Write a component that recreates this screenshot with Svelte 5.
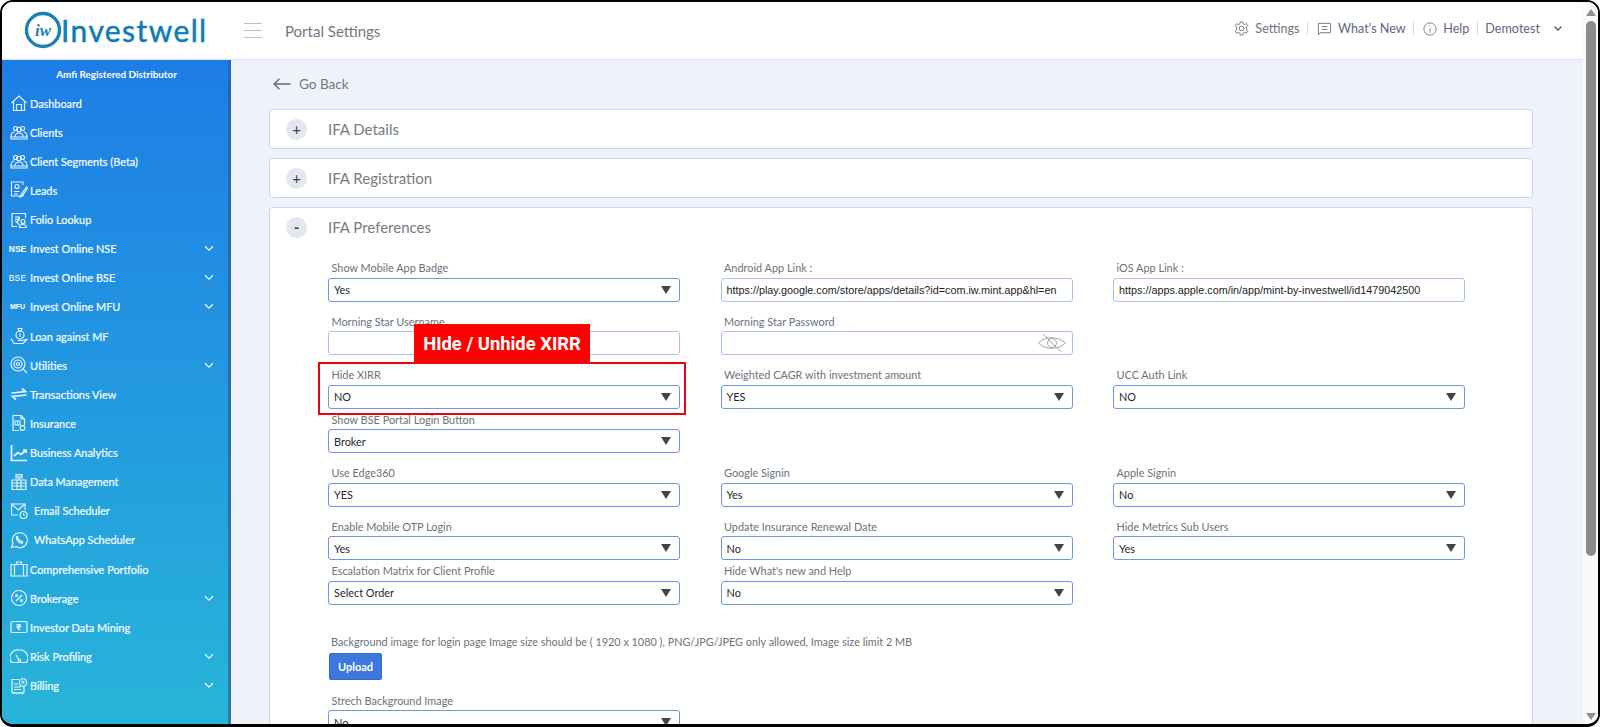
<script>
  const c = (x, y, r) => `M${x - r} ${y}a${r} ${r} 0 1 0 ${2 * r} 0a${r} ${r} 0 1 0 ${-2 * r} 0`;
  const nav = [
    { t: 'Dashboard', d: ['M1.5 9 9 2l7.5 7', 'M3.5 7.5V16.5H14.5V7.5', 'M6.5 16.5V10.5H11.5V16.5'] },
    { t: 'Clients', d: [c(5.5, 5.5, 2), c(12.5, 5.5, 2), c(9, 6.5, 2.3), 'M1 14c0-3 1.5-5 3.5-5', 'M17 14c0-3-1.5-5-3.5-5', 'M5 14c0-2.500 1.500-4 4-4s4 1.500 4 4', 'M1 14H17V16H1Z'] },
    { t: 'Client Segments (Beta)', d: [c(5.5, 5.5, 2), c(12.5, 5.5, 2), c(9, 6.5, 2.3), 'M1 14c0-3 1.5-5 3.5-5', 'M17 14c0-3-1.5-5-3.5-5', 'M5 14c0-2.500 1.500-4 4-4s4 1.500 4 4', 'M1 14H17V16H1Z'] },
    { t: 'Leads', d: ['M13 4V1H1.500V15H13V13', c(7, 5.5, 2), 'M4 10.500H9.500M4 13H8', 'M16.500 6 11 13.500 10 16 12.300 14.700 17.500 7.200Z'] },
    { t: 'Folio Lookup', d: ['M15.500 7V2.500H2V15.500H7', 'M5 6H10M5 8.300H10M7 6C10 6 10 10.500 6 10.500L9.500 14', c(13, 10.5, 2), 'M9.500 16.500c0-2 1.500-3 3.500-3s3.500 1 3.500 3Z'] },
    { t: 'Invest Online NSE', badge: 'NSE', arrow: true },
    { t: 'Invest Online BSE', badge: 'BSE', thin: true, arrow: true },
    { t: 'Invest Online MFU', badge: 'MFU', small: true, arrow: true },
    { t: 'Loan against MF', d: [c(10, 8, 4), 'M8 1.500h4l-1 2.500H9Z', 'M1 11.500 4 16.500H13L17 12.500 12 13.500H8', 'M10 6v4'] },
    { t: 'Utilities', arrow: true, d: [c(8, 8, 7), c(8, 8, 4), c(8, 8, 1.5), 'M12.500 12.500 17 17'] },
    { t: 'Transactions View', heavy: true, d: ['M1.500 8 15.500 6.500 12 3.500', 'M16.500 10 2.500 11.500 6 14.500'] },
    { t: 'Insurance', d: ['M3 1.500H11L14.500 5V11M9 16.500H3V1.500', 'M11 1.500V5H14.500', 'M5 7H10V11H5ZM7.500 7V11', c(12.5, 14, 2.4)] },
    { t: 'Business Analytics', heavy: true, d: ['M1.500 1V16.500H17', 'M4 12 8 8.500 11 10.500 16 6', 'M13 6H16V9'] },
    { t: 'Data Management', d: ['M6 1.500H12V5H6ZM6 3.200H12', 'M2 7H16V16.500H2ZM2 10H16M2 13H16M7 7V16.500M11 7V16.500', 'M9 5V7'] },
    { t: 'Email Scheduler', far: true, d: ['M15 8V2H1.500V13H8', 'M1.500 2 8.300 8 15 2', c(13.5, 13, 3.5), 'M13.500 11V13H15'] },
    { t: 'WhatsApp Scheduler', far: true, d: ['M1.500 16.500 3 12.300A7.500 7.500 0 1 1 5.800 15.500Z', 'M6.500 5.500C5.500 8 9.500 13 12.500 12L12.300 10.300 10.500 10.500 7.700 7.500 8 6Z'] },
    { t: 'Comprehensive Portfolio', d: ['M1 4.500H17V16H1ZM4.500 4.500V16M13.500 4.500V16', 'M6.500 4.500V2H11.500V4.500'] },
    { t: 'Brokerage', arrow: true, d: [c(9, 9, 7.5), 'M6 12 12 6', c(6.5, 6.5, 1), c(11.5, 11.5, 1)] },
    { t: 'Investor Data Mining', d: ['M2.500 3.500H15.500a1.500 1.500 0 0 1 1.500 1.500V13a1.500 1.500 0 0 1-1.500 1.500H2.500A1.500 1.500 0 0 1 1 13V5A1.500 1.500 0 0 1 2.500 3.500Z', 'M6.500 6.500H11M6.500 8.300H11M8 6.500C10.500 6.500 10.500 10 7.500 10L10 12'] },
    { t: 'Risk Profiling', arrow: true, d: ['M1.500 15.500A8 8 0 0 1 9.500 3 8 8 0 0 1 16.500 15.500Z', 'M6 8 9 13', c(9.5, 13.5, 1.2)] },
    { t: 'Billing', arrow: true, d: ['M9 2.500H2V15.500L3.500 16.500 5 15.500 6.500 16.500 8 15.500 9.500 16.500 11 15.500 12.500 16.500 14 15.500V9', c(13, 5.5, 3.7), 'M4 7H8M4 10H11M4 12.500H11', 'M11.500 4.500H14.500M11.500 6H14.500'] }
  ];
  const sel = (label, value) => ({ label, value, k: 'select' });
  const rows = [
    { f: [sel('Show Mobile App Badge', 'Yes'), { label: 'Android App Link :', value: 'https://play.google.com/store/apps/details?id=com.iw.mint.app&hl=en', k: 'url' }, { label: 'iOS App Link :', value: 'https://apps.apple.com/in/app/mint-by-investwell/id1479042500', k: 'url' }] },
    { f: [{ label: 'Morning Star Username', value: '', k: 'url' }, { label: 'Morning Star Password', value: '', k: 'eye' }, null] },
    { f: [sel('Hide XIRR', 'NO'), sel('Weighted CAGR with investment amount', 'YES'), sel('UCC Auth Link', 'NO')] },
    { tight: true, f: [sel('Show BSE Portal Login Button', 'Broker'), null, null] },
    { f: [sel('Use Edge360', 'YES'), sel('Google Signin', 'Yes'), sel('Apple Signin', 'No')] },
    { f: [sel('Enable Mobile OTP Login', 'Yes'), sel('Update Insurance Renewal Date', 'No'), sel('Hide Metrics Sub Users', 'Yes')] },
    { tight: true, f: [sel('Escalation Matrix for Client Profile', 'Select Order'), sel("Hide What's new and Help", 'No'), null] }
  ];
</script>

{#snippet field(x)}
  <div class="field">
    <div class="label">{x.label}</div>
    <div class="control" class:soft={x.k !== 'select'} class:url={x.k === 'url'}>
      <span>{x.value}</span>
      {#if x.k === 'select'}<i class="tri"></i>{/if}
      {#if x.k === 'eye'}
        <svg class="eye" width="30" height="20" viewBox="0 0 30 20">
          <path d="M1.500 10C8 3 21 3 28.500 10 21 17 8 17 1.500 10Z" />
          <circle cx="15" cy="10" r="4.500" />
          <path d="M6 1 24 19" />
        </svg>
      {/if}
    </div>
  </div>
{/snippet}

<div class="frame">
  <div class="left">
    <header>
      <div class="logo">
        <svg width="40" height="40" viewBox="0 0 40 40">
          <circle cx="20" cy="20" r="16.500" fill="none" stroke="#1a82b5" stroke-width="3.400" />
          <text x="20" y="26" text-anchor="middle" class="iw">iw</text>
        </svg>
        <span>Investwell</span>
      </div>
      <div class="burger"><i></i><i></i><i></i></div>
      <div class="title">Portal Settings</div>
      <div class="tools">
        <svg class="ti" width="15" height="15" viewBox="0 0 16 16"><circle cx="8" cy="8" r="2.500" /><path d="M6.700 1H9.300L9.700 3 11.300 3.800 13.100 2.800 14.700 5 13.300 6.500V9.500L14.700 11 13.100 13.200 11.300 12.200 9.700 13 9.300 15H6.700L6.300 13 4.700 12.200 2.900 13.200 1.300 11 2.700 9.500V6.500L1.300 5 2.900 2.800 4.700 3.800 6.300 3Z" /></svg>
        <span class="tt">Settings</span><b></b>
        <svg class="ti" width="15" height="15" viewBox="0 0 16 16"><path d="M1.500 2.500H14.500V12.500H3.500L1.500 14.500Z" /><path d="M5 6H11M5 9H11" /></svg>
        <span class="tt ink">What's New</span><b></b>
        <svg class="ti" width="14" height="14" viewBox="0 0 16 16"><circle cx="8" cy="8" r="7" /><path d="M8 7V12M8 4V5.200" /></svg>
        <span class="tt ink">Help</span><b></b>
        <span class="tt ink demo">Demotest</span>
        <svg class="ti chev" width="10" height="7" viewBox="0 0 10 7"><path d="M1.500 1.500 5 5 8.500 1.500" /></svg>
      </div>
    </header>
    <div class="body">
      <aside>
        <div class="amfi">Amfi Registered Distributor</div>
        <nav>
          {#each nav as it}
            <div class="item">
              <div class="ic" class:heavy={it.heavy}>
                {#if it.badge}
                  <span class="badge" class:thin={it.thin} class:small={it.small}>{it.badge}</span>
                {:else}
                  <svg width="18" height="18" viewBox="0 0 18 18">
                    {#each it.d as d}<path {d} />{/each}
                  </svg>
                {/if}
              </div>
              <span class="nt" class:far={it.far}>{it.t}</span>
              {#if it.arrow}
                <svg class="arrow" width="10" height="7" viewBox="0 0 10 7"><path d="M1 1.200 5 5.200 9 1.200" /></svg>
              {/if}
            </div>
          {/each}
        </nav>
        <div class="sthumb"></div>
      </aside>
      <main>
        <div class="back">
          <svg width="18" height="12" viewBox="0 0 18 12"><path d="M17.500 6H1M6.500 .8 1 6 6.500 11.200" /></svg>
          <span>Go Back</span>
        </div>
        <section class="card">
          <div class="head"><span class="round">+</span><h2>IFA Details</h2></div>
        </section>
        <section class="card">
          <div class="head"><span class="round">+</span><h2>IFA Registration</h2></div>
        </section>
        <section class="card open">
          <div class="head"><span class="round minus">-</span><h2>IFA Preferences</h2></div>
          <div class="form">
            {#each rows as r}
              <div class="row" class:tight={r.tight}>
                {#each r.f as x}
                  {#if x}{@render field(x)}{:else}<div></div>{/if}
                {/each}
              </div>
            {/each}
            <div class="note">Background image for login page Image size should be ( 1920 x 1080 ), PNG/JPG/JPEG only allowed, Image size limit 2 MB</div>
            <div class="upload">Upload</div>
            <div class="row last">
              {@render field(sel('Strech Background Image', 'No'))}
            </div>
            <div class="redbox"></div>
            <div class="redtag">HIde / Unhide XIRR</div>
          </div>
        </section>
      </main>
    </div>
  </div>
  <div class="scroll">
    <i class="up"></i>
    <div class="thumb"></div>
    <i class="down"></i>
  </div>
</div>

<style>
  :global(body) { margin: 0; background: #fff; overflow: hidden; }
  .frame {
    width: 1600px; height: 727px; box-sizing: border-box;
    border: 2px solid #000; border-bottom-width: 3px; border-radius: 13px;
    display: flex; overflow: hidden; background: #fff;
    font-family: Lato, "Liberation Sans", sans-serif;
  }
  .left { flex: 1; min-width: 0; display: flex; flex-direction: column; }
  header {
    height: 57px; flex: none; display: flex; align-items: center;
    border-bottom: 1px solid #d9e1ee; background: #fff;
  }
  .logo { display: flex; align-items: center; width: 240px; padding-left: 20.5px; box-sizing: border-box; color: #0f7db2; margin-top: -1px; flex: none; }
  .logo span { font-size: 30px; letter-spacing: 1.4px; margin-left: -1.5px; -webkit-text-stroke: .5px #0f7db2; }
  .iw { font: italic 700 17px "Liberation Serif", serif; fill: #1a82b5; }
  .burger { width: 18px; display: flex; flex-direction: column; gap: 6px; margin-left: 2px; }
  .burger i { display: block; height: 1px; background: #b9bfc7; }
  .title { font-size: 15px; color: #71777f; margin-left: 23px; }
  .tools { margin-left: auto; display: flex; align-items: center; padding-right: 20px; margin-top: -4px; }
  .ti { fill: none; stroke: #6f747c; stroke-width: 1; }
  .tt { font-size: 12.6px; color: #6f757d; margin-left: 6px; }
  .ink { color: #5e648a; }
  .tt + b { width: 1px; height: 13px; background: #d9dce2; margin: 0 9px 0 7.5px; }
  .demo { margin-left: -1.5px; }
  .chev { margin-left: 13px; stroke-width: 1.300; stroke: #555; }

  .body { flex: 1; min-height: 0; display: flex; }
  aside {
    width: 229px; flex: none; position: relative; color: #fff;
    background: linear-gradient(180deg, #1e7de6 0%, #28b5d9 100%);
    box-shadow: inset -3px 0 0 rgba(40, 70, 110, .35);
  }
  .amfi { text-align: center; font-size: 9.9px; font-weight: 700; padding-top: 7px; height: 21.5px; line-height: 14px; }
  .item { height: 29.13px; display: flex; align-items: center; position: relative; padding-left: 7px; }
  .ic { width: 20px; height: 20px; display: flex; align-items: center; justify-content: center; flex: none; }
  .ic svg { fill: none; stroke: #eaf6ff; stroke-width: 1.150; }
  .ic.heavy svg { stroke-width: 1.700; }
  .badge { font: 700 8.5px "Liberation Sans", sans-serif; margin-left: -3px; }
  .badge.thin { font-weight: 400; letter-spacing: .2px; }
  .badge.small { font-size: 7px; }
  .nt { font-size: 10.9px; margin-left: 1px; color: #f2fbff; white-space: nowrap; -webkit-text-stroke: .2px #fff; }
  .nt.far { margin-left: 5px; }
  .arrow { position: absolute; left: 202px; top: 11px; fill: none; stroke: #eaf6ff; stroke-width: 1.300; }
  .sthumb { position: absolute; right: 0; top: 23px; width: 3px; height: 650px; background: rgba(50, 90, 150, .35); }

  main { flex: 1; min-width: 0; background: #eff3f9; padding: 13px 50px 0 38px; overflow: hidden; }
  .back { height: 21px; display: flex; align-items: center; gap: 8px; margin: 0 0 15px 4px; color: #71777f; font-size: 13.5px; }
  .back svg { fill: none; stroke: #636a73; stroke-width: 1.300; }
  .card { background: #fff; border: 1px solid #c7d6ee; border-radius: 4px; margin-bottom: 9px; }
  .open { margin-bottom: 0; border-bottom: 0; }
  .head { height: 38px; display: flex; align-items: center; padding-left: 16px; }
  .round {
    width: 21px; height: 21px; border-radius: 50%; background: #e5e7ee; color: #3e4450;
    display: flex; align-items: center; justify-content: center; font-size: 15px; line-height: 1;
  }
  .minus { font-weight: 700; }
  h2 { font-size: 15px; font-weight: 400; color: #757b83; margin: -1px 0 0 21px; }

  .form { position: relative; padding: 12.5px 0 0 58px; }
  .row { display: grid; grid-template-columns: 352px 352px 352px; column-gap: 40.5px; margin-bottom: 10.5px; }
  .row.tight { margin-top: -9px; }
  .row.last { margin: 11px 0 0; }
  .label { height: 16px; line-height: 16px; font-size: 10.9px; color: #6c7279; padding-left: 3.5px; margin: 1.5px 0; white-space: nowrap; }
  .control {
    position: relative; height: 24px; box-sizing: border-box; border: 1px solid #6f95e4; border-radius: 3px;
    display: flex; align-items: center; padding-left: 5px; font-size: 10.9px; color: #26282c; background: #fff; white-space: nowrap;
  }
  .control.soft { border-color: #a8c1f2; }
  .url { font-family: "Liberation Sans", sans-serif; font-size: 10.8px; color: #222; }
  .tri {
    position: absolute; right: 8px; top: 7px; width: 0; height: 0;
    border-left: 5px solid transparent; border-right: 5px solid transparent; border-top: 8px solid #444;
  }
  .eye { position: absolute; right: 5px; top: 1px; fill: none; stroke: #a4a4a4; stroke-width: 1; }
  .note { font-size: 10.85px; line-height: 16px; color: #6c7279; margin: 29.5px 0 3px 3px; white-space: nowrap; }
  .upload {
    width: 53px; height: 27px; margin-left: 1px; background: #3d79dd; border: 1px solid #2f6ccf; border-radius: 2px; box-sizing: border-box;
    color: #fff; font-size: 11px; font-weight: 700; display: flex; align-items: center; justify-content: center;
  }

  .redbox { position: absolute; left: 48px; top: 116px; width: 368px; height: 53px; box-sizing: border-box; border: 2px solid #e30613; }
  .redtag {
    position: absolute; left: 144px; top: 78px; width: 176px; height: 38px; background: #fe0000; color: #fff;
    font: 700 18.4px Roboto, "Liberation Sans", sans-serif; display: flex; align-items: center; justify-content: center;
  }

  .scroll { width: 15px; flex: none; background: #fafafa; display: flex; flex-direction: column; align-items: center; position: relative; }
  .thumb { width: 10px; height: 535px; background: #8b8b8b; border-radius: 5px; margin-top: 5px; }
  .up, .down { width: 0; height: 0; border-left: 5.500px solid transparent; border-right: 5.500px solid transparent; }
  .up { border-bottom: 7px solid #8e8e8e; margin-top: 7px; }
  .down { border-top: 7px solid #8e8e8e; margin-top: auto; margin-bottom: 4px; }
</style>
